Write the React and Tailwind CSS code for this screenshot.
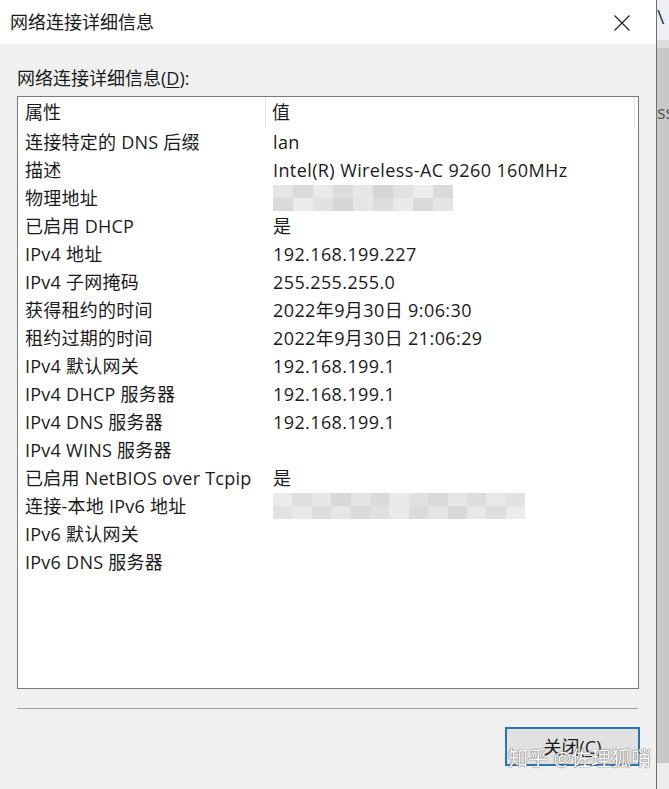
import React from 'react';

const rows = [
  ['连接特定的 DNS 后缀', 'lan'],
  ['描述', 'Intel(R) Wireless-AC 9260 160MHz'],
  ['物理地址', 'blur1'],
  ['已启用 DHCP', '是'],
  ['IPv4 地址', '192.168.199.227'],
  ['IPv4 子网掩码', '255.255.255.0'],
  ['获得租约的时间', '2022年9月30日 9:06:30'],
  ['租约过期的时间', '2022年9月30日 21:06:29'],
  ['IPv4 默认网关', '192.168.199.1'],
  ['IPv4 DHCP 服务器', '192.168.199.1'],
  ['IPv4 DNS 服务器', '192.168.199.1'],
  ['IPv4 WINS 服务器', ''],
  ['已启用 NetBIOS over Tcpip', '是'],
  ['连接-本地 IPv6 地址', 'blur2'],
  ['IPv6 默认网关', ''],
  ['IPv6 DNS 服务器', ''],
];

const shades1 = ['#e4e4e4', '#d9d9d9', '#e9e9e9', '#dcdcdc', '#e6e6e6', '#d6d6d6', '#e2e2e2', '#ebebeb', '#dadada'];
const shades2 = ['#ebebeb', '#dedede', '#e7e7e7', '#d8d8d8', '#e4e4e4', '#dbdbdb', '#e9e9e9', '#e0e0e0', '#d9d9d9', '#e6e6e6', '#dddddd', '#e8e8e8', '#e2e2e2'];

function Blur({ shades, width }) {
  return (
    <div className="flex flex-col" style={{ width }}>
      <div className="flex h-[13px]">
        {shades.map((c, i) => (
          <div key={i} className="flex-1" style={{ background: c }} />
        ))}
      </div>
      <div className="flex h-[13px]">
        {shades.slice().reverse().map((c, i) => (
          <div key={i} className="flex-1" style={{ background: c }} />
        ))}
      </div>
    </div>
  );
}

function Value({ v }) {
  if (v === 'blur1') return <Blur shades={shades1} width={180} />;
  if (v === 'blur2') return <Blur shades={shades2} width={252} />;
  return <span>{v}</span>;
}

export default function App() {
  return (
    <div
      className="flex w-[669px] h-[789px] overflow-hidden text-[#1a1a1a]"
      style={{ fontFamily: '"Open Sans", "Noto Sans CJK SC", sans-serif' }}
    >
      <div className="relative flex flex-col w-[657px] h-full bg-[#f0f0f0] border-r border-[#6e6e6e]">
        {/* title bar */}
        <div className="flex items-center justify-between h-[44px] bg-white pl-[10px] pr-[26px]">
          <span className="text-[18px] leading-none">网络连接详细信息</span>
          <svg width="16" height="16" viewBox="0 0 16 16" className="mt-[1px]">
            <path d="M0.5 0.5 L15.5 15.5 M15.5 0.5 L0.5 15.5" stroke="#1a1a1a" strokeWidth="1.1" />
          </svg>
        </div>

        {/* body */}
        <div className="flex flex-col pl-[17px] pt-[22px]">
          <div className="text-[18px] leading-[24px]">
            网络连接详细信息(<span className="underline underline-offset-2">D</span>):
          </div>

          <div className="mt-[6px] w-[622px] h-[593px] bg-white border border-[#7a7a7a] text-[18px]">
            <div className="flex h-[31px] items-center">
              <div className="w-[248px] h-full flex items-center pl-[7px] border-r border-[#e5e5e5]">属性</div>
              <div className="w-[369px] h-full flex items-center pl-[6px] border-r border-[#e5e5e5]">值</div>
            </div>
            {rows.map(([k, v]) => (
              <div key={k} className="flex h-[28px] items-center">
                <div className="w-[248px] pl-[7px] whitespace-nowrap tracking-[0.25px]">{k}</div>
                <div className="pl-[7px] whitespace-nowrap tracking-[0.4px]">
                  <Value v={v} />
                </div>
              </div>
            ))}
          </div>

          <div className="mt-[19px] w-[621px] h-px bg-[#a0a0a0]" />

          <div className="flex justify-end w-[623px] mt-[18px]">
            <button className="w-[135px] h-[39px] bg-[#e1e1e1] border-2 border-[#2b74b2] text-[18px] leading-none">
              关闭(<span className="underline underline-offset-2">C</span>)
            </button>
          </div>
        </div>

        {/* watermark */}
        <div
          className="absolute left-[508px] top-[749px] text-[20px] leading-none text-white whitespace-nowrap"
          style={{ textShadow: '0 0 1px #555, 0 0 1px #555' }}
        >
          知乎 @佐理狐哨
        </div>
      </div>

      {/* background window strip */}
      <div className="flex flex-col w-[12px] h-full">
        <div className="h-[40px] bg-[#eef0f3] text-[#2a3a66] text-[20px] leading-[34px] overflow-hidden">\</div>
        <div className="h-[8px] bg-[#dcdcdc]" />
        <div className="flex-1 bg-[#c8c8c8] text-[#555] text-[18px] leading-[24px] pt-[52px] overflow-hidden">ss</div>
        <div className="h-[26px] bg-[#ececec]" />
      </div>
    </div>
  );
}
